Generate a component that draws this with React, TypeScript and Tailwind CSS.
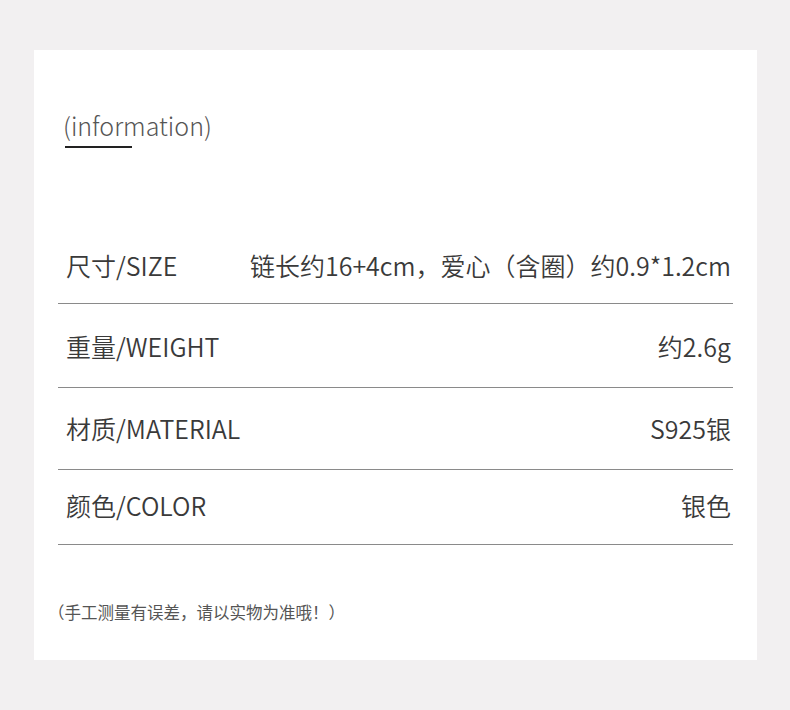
const rows = [
  { label: '尺寸/SIZE', value: '链长约16+4cm，爱心（含圈）约0.9*1.2cm', pad: 'pt-[48px] pb-[23px]' },
  { label: '重量/WEIGHT', value: '约2.6g', pad: 'pt-[27px] pb-[26px]' },
  { label: '材质/MATERIAL', value: 'S925银', pad: 'pt-[25px] pb-[26px]' },
  { label: '颜色/COLOR', value: '银色', pad: 'pt-[20px] pb-[24px]' },
]

export default function App() {
  return (
    <div
      className="h-[710px] w-[790px] bg-[#f2f0f1] pt-[50px] pl-[34px]"
      style={{ fontFamily: '"Noto Sans CJK SC", "Noto Sans", sans-serif' }}
    >
      <div className="flex h-[610px] w-[723px] flex-col bg-white pr-[24px] pl-[24px]">
        <div className="pt-[59px] pl-[5px]">
          <p className="text-[25px] leading-[32px] font-light text-[#555]">(information)</p>
          <div className="mt-[5px] ml-[2px] h-[2px] w-[67px] bg-[#222]" />
        </div>

        <div className="mt-[54px]">
          {rows.map((row) => (
            <div
              key={row.label}
              className={`flex items-center justify-between border-b border-[#8a8a8a] pr-[2px] pl-[8px] text-[25px] leading-[30px] font-[350] text-[#3a3a3a] ${row.pad}`}
            >
              <span>{row.label}</span>
              <span>{row.value}</span>
            </div>
          ))}
        </div>

        <p className="mt-[55px] -ml-[10px] text-[16.5px] leading-[24px] text-[#555]">
          （手工测量有误差，请以实物为准哦！）
        </p>
      </div>
    </div>
  )
}
